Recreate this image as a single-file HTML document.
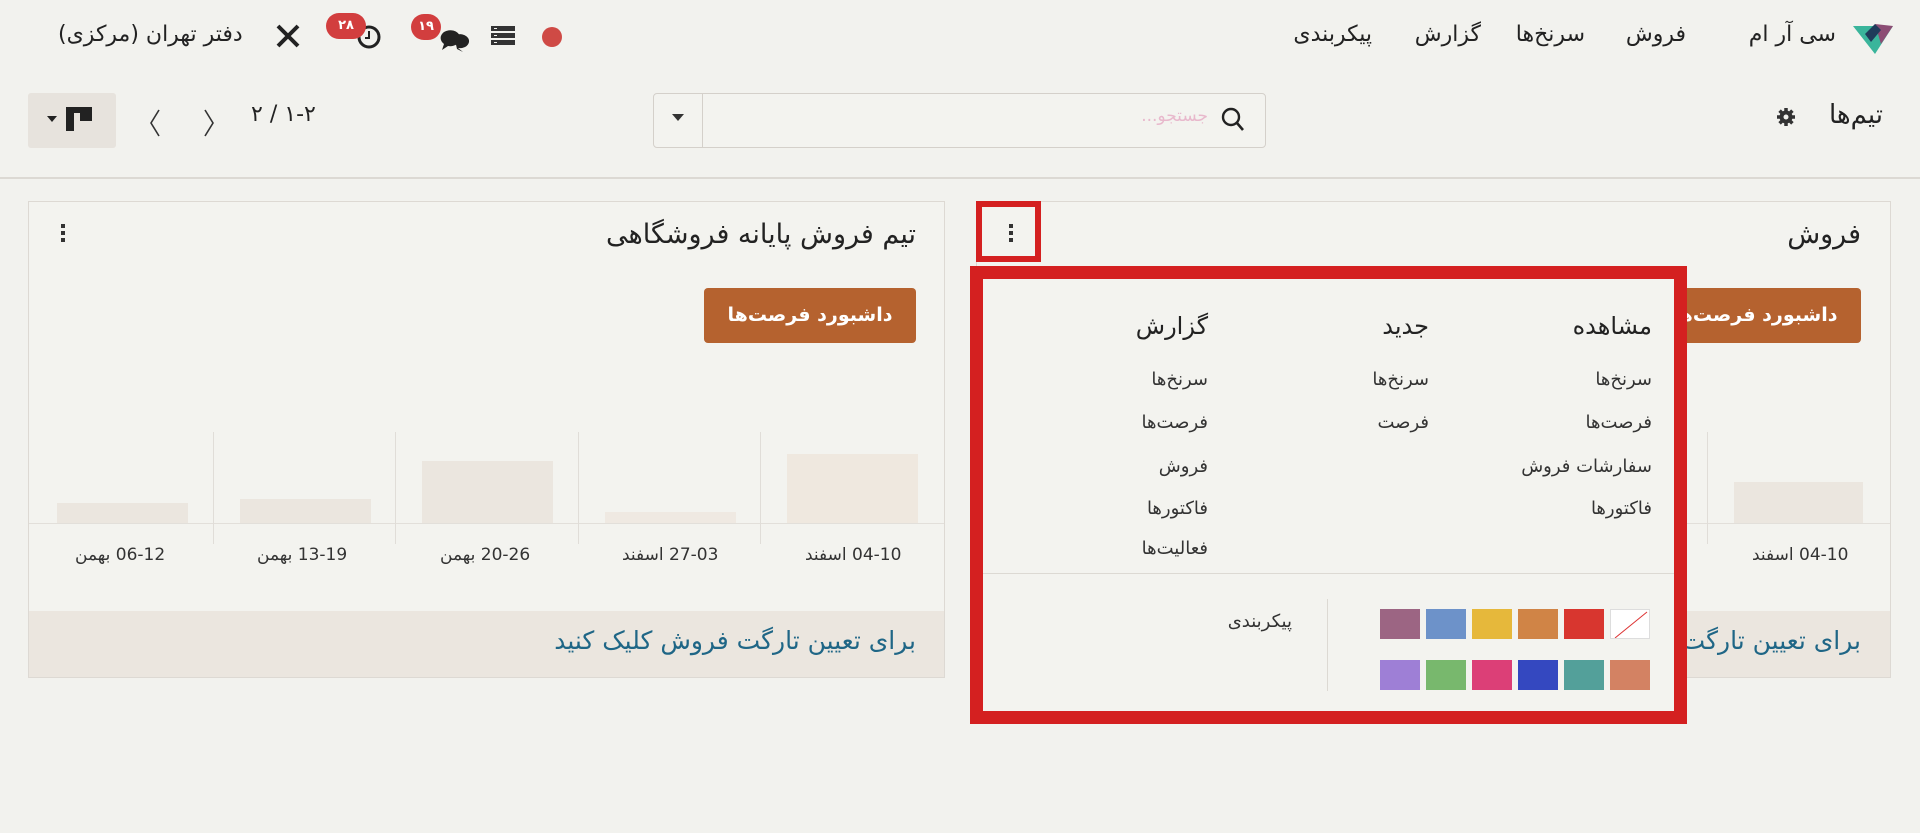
<!DOCTYPE html>
<html><head><meta charset="utf-8"><style>
*{margin:0;padding:0;box-sizing:border-box}
body{width:1920px;height:833px;background:#f2f2ee;font-family:"DejaVu Sans","Liberation Sans","Noto Sans CJK SC",sans-serif;color:#222;position:relative;overflow:hidden}
.a{position:absolute;white-space:nowrap}
.r{direction:rtl}
.nav{font-size:22px;top:22px}
.card{position:absolute;top:201px;width:917px;height:477px;border:1px solid #ddd9d3;background:#f3f3ef}
.ft{position:absolute;left:0;right:0;bottom:0;height:66px;background:#ebe6df}
.btn{position:absolute;background:#b5622f;color:#fff;font-size:19px;font-weight:bold;border-radius:4px;height:55px;line-height:55px;text-align:center}
.bar{position:absolute;background:#ebe6df}
.vl{position:absolute;width:1px;background:#e0ddd8}
.lbl{position:absolute;font-size:17px;color:#333;top:343px}
.sw{position:absolute;width:40px;height:30px}
.mi{font-size:18px;color:#333}
.mh{font-size:24px;color:#222}
</style></head><body>
<svg class="a" style="left:1851px;top:20px" width="44" height="36" viewBox="0 0 44 36"><path d="M2 6 L42 6 L24 34 Z" fill="#3ab59b"/><path d="M24 4 L42 6 L30 24 Z" fill="#8c4d74"/><path d="M14 14 L24 4 L30 10 L20 22Z" fill="#1f3b5a"/></svg>
<div class="a r nav" style="right:84px">سی آر ام</div>
<div class="a r nav" style="right:234px">فروش</div>
<div class="a r nav" style="right:335px">سرنخ‌ها</div>
<div class="a r nav" style="right:439px">گزارش</div>
<div class="a r nav" style="right:548px">پیکربندی</div>
<div class="a" style="left:542px;top:27px;width:20px;height:20px;border-radius:50%;background:#cf4a45"></div>
<svg class="a" style="left:490px;top:25px" width="26" height="22"><g fill="#333"><rect x="1" y="1" width="24" height="5"/><rect x="1" y="8" width="24" height="5"/><rect x="1" y="15" width="24" height="5"/></g><g fill="#f2f2ee"><rect x="4" y="3" width="3" height="1"/><rect x="4" y="10" width="3" height="1"/><rect x="4" y="17" width="3" height="1"/></g></svg>
<svg class="a" style="left:434px;top:26px" width="36" height="26"><path d="M10 6 a10 8 0 1 1 4 14 l-6 4 2-6 a10 8 0 0 1 0-12z" fill="#222"/><path d="M20 10 a9 7 0 1 1 4 12 l5 4-6-3z" fill="#222"/></svg>
<div class="a" style="left:411px;top:14px;min-width:30px;height:26px;border-radius:13px;background:#d23e3e;color:#fff;font-size:13px;font-weight:bold;line-height:26px;text-align:center">۱۹</div>
<svg class="a" style="left:356px;top:24px" width="26" height="26"><circle cx="13" cy="13" r="10" fill="none" stroke="#222" stroke-width="3"/><path d="M13 7v7h-4" fill="none" stroke="#222" stroke-width="2"/></svg>
<div class="a" style="left:326px;top:13px;width:40px;height:26px;border-radius:13px;background:#d23e3e;color:#fff;font-size:13px;font-weight:bold;line-height:26px;text-align:center">۲۸</div>
<svg class="a" style="left:274px;top:22px" width="28" height="28"><path d="M4 4 L24 24 M24 4 L4 24" stroke="#222" stroke-width="4"/></svg>
<div class="a r" style="left:58px;top:22px;font-size:22px">دفتر تهران (مرکزی)</div>
<div class="a r" style="right:37px;top:100px;font-size:26px">تیم‌ها</div>
<svg class="a" style="left:1776px;top:107px" width="20" height="20" viewBox="0 0 20 20"><circle cx="10" cy="10" r="6.5" fill="#333"/><g stroke="#333" stroke-width="3.5"><path d="M10 1v18M1 10h18M3.6 3.6l12.8 12.8M16.4 3.6L3.6 16.4"/></g><circle cx="10" cy="10" r="2.5" fill="#f2f2ee"/></svg>
<div class="a" style="left:653px;top:93px;width:613px;height:55px;border:1px solid #d4d0ca;border-radius:4px;background:#f3f3ef"></div>
<div class="a" style="left:702px;top:93px;width:1px;height:55px;background:#d4d0ca"></div>
<div class="a" style="left:672px;top:114px;border:6px solid transparent;border-top:7px solid #333;border-bottom:0"></div>
<svg class="a" style="left:1220px;top:106px" width="26" height="28"><circle cx="11" cy="11" r="8" fill="none" stroke="#222" stroke-width="2.4"/><path d="M17 17l6 7" stroke="#222" stroke-width="2.6"/></svg>
<div class="a r" style="right:712px;top:106px;font-size:17px;color:#e8b8cc">جستجو...</div>
<div class="a" style="left:251px;top:102px;font-size:22px;display:flex;gap:0"><span>۲</span><span>&nbsp;/&nbsp;</span><span>۱</span><span>-</span><span>۲</span></div>
<svg class="a" style="left:143px;top:108px" width="80" height="30"><path d="M16 2 L8 15 L16 28 M62 2 L70 15 L62 28" fill="none" stroke="#333" stroke-width="1.6"/></svg>
<div class="a" style="left:28px;top:93px;width:88px;height:55px;background:#e7e3dd;border-radius:3px"></div>
<div class="a" style="left:47px;top:116px;border:5px solid transparent;border-top:6px solid #222;border-bottom:0"></div>
<div class="a" style="left:66px;top:107px;width:26px;height:6px;background:#222"></div>
<div class="a" style="left:66px;top:107px;width:8px;height:24px;background:#222"></div>
<div class="a" style="left:80px;top:107px;width:12px;height:14px;background:#222"></div>
<div class="a" style="left:0;top:177px;width:1920px;height:2px;background:#dcd9d3"></div>

<div class="card" style="left:28px">
 <div class="a r" style="right:28px;top:17px;font-size:27px">تیم فروش پایانه فروشگاهی</div>
 <div class="a" style="left:32px;top:22px;width:4px;font-size:0"><div style="height:4px;background:#333;margin-bottom:3px"></div><div style="height:4px;background:#333;margin-bottom:3px"></div><div style="height:4px;background:#333"></div></div>
 <div class="btn r" style="right:28px;top:86px;width:212px">داشبورد فرصت‌ها</div>
 <div class="a" style="left:0;right:0;top:321px;height:1px;background:#e2dfda"></div>
 <div class="vl" style="left:184px;top:230px;height:112px"></div>
 <div class="vl" style="left:366px;top:230px;height:112px"></div>
 <div class="vl" style="left:549px;top:230px;height:112px"></div>
 <div class="vl" style="left:731px;top:230px;height:112px"></div>
 <div class="bar" style="left:28px;width:131px;top:301px;height:20px"></div>
 <div class="bar" style="left:211px;width:131px;top:297px;height:24px"></div>
 <div class="bar" style="left:393px;width:131px;top:259px;height:62px"></div>
 <div class="bar" style="left:576px;width:131px;top:310px;height:11px;background:#efe9e2"></div>
 <div class="bar" style="left:758px;width:131px;top:252px;height:69px;background:#efe8df"></div>
 <div class="lbl r" style="left:46px">06-12 بهمن</div>
 <div class="lbl r" style="left:228px">13-19 بهمن</div>
 <div class="lbl r" style="left:411px">20-26 بهمن</div>
 <div class="lbl r" style="left:593px">27-03 اسفند</div>
 <div class="lbl r" style="left:776px">04-10 اسفند</div>
 <div class="ft"><div class="a r" style="right:28px;top:15px;font-size:25px;color:#1f6686">برای تعیین تارگت فروش کلیک کنید</div></div>
</div>

<div class="card" style="left:976px;width:915px">
 <div class="a r" style="right:29px;top:17px;font-size:27px">فروش</div>
 <div class="btn r" style="right:29px;top:86px;width:212px">داشبورد فرصت‌ها</div>
 <div class="a" style="left:0;right:0;top:321px;height:1px;background:#e2dfda"></div>
 <div class="vl" style="left:730px;top:230px;height:112px"></div>
 <div class="bar" style="left:757px;width:129px;top:280px;height:41px"></div>
 <div class="lbl r" style="left:775px">04-10 اسفند</div>
 <div class="ft"><div class="a r" style="right:29px;top:15px;font-size:25px;color:#1f6686">برای تعیین تارگت فروش کلیک کنید</div></div>
 <div class="a" style="left:32px;top:22px;width:4px;font-size:0"><div style="height:4px;background:#333;margin-bottom:3px"></div><div style="height:4px;background:#333;margin-bottom:3px"></div><div style="height:4px;background:#333"></div></div>
</div>
<div class="a" style="left:976px;top:201px;width:65px;height:61px;border:6px solid #d42020"></div>

<div class="a" style="left:970px;top:266px;width:717px;height:458px;border:13px solid #d42020;background:#f3f3ef">
 <div class="a r mh" style="right:22px;top:33px">مشاهده</div>
 <div class="a r mh" style="right:245px;top:33px">جدید</div>
 <div class="a r mh" style="right:466px;top:33px">گزارش</div>
 <div class="a r mi" style="right:22px;top:90px">سرنخ‌ها</div>
 <div class="a r mi" style="right:22px;top:133px">فرصت‌ها</div>
 <div class="a r mi" style="right:22px;top:177px">سفارشات فروش</div>
 <div class="a r mi" style="right:22px;top:219px">فاکتورها</div>
 <div class="a r mi" style="right:245px;top:90px">سرنخ‌ها</div>
 <div class="a r mi" style="right:245px;top:133px">فرصت</div>
 <div class="a r mi" style="right:466px;top:90px">سرنخ‌ها</div>
 <div class="a r mi" style="right:466px;top:133px">فرصت‌ها</div>
 <div class="a r mi" style="right:466px;top:177px">فروش</div>
 <div class="a r mi" style="right:466px;top:219px">فاکتورها</div>
 <div class="a r mi" style="right:466px;top:259px">فعالیت‌ها</div>
 <div class="a" style="left:0;right:0;top:294px;height:1px;background:#dcd9d3"></div>
 <div class="a" style="left:344px;top:320px;width:1px;height:92px;background:#dcd9d3"></div>
 <div class="a r mi" style="right:382px;top:332px">پیکربندی</div>
 <svg class="sw" style="left:627px;top:330px;background:#fff;border:1px solid #ddd" width="40" height="30"><path d="M36 2 L4 28" stroke="#d33" stroke-width="1"/></svg>
 <div class="sw" style="left:581px;top:330px;background:#d8362f"></div>
 <div class="sw" style="left:535px;top:330px;background:#d08446"></div>
 <div class="sw" style="left:489px;top:330px;background:#e6b83b"></div>
 <div class="sw" style="left:443px;top:330px;background:#6d92c9"></div>
 <div class="sw" style="left:397px;top:330px;background:#9c6583"></div>
 <div class="sw" style="left:627px;top:381px;background:#d38263"></div>
 <div class="sw" style="left:581px;top:381px;background:#53a09a"></div>
 <div class="sw" style="left:535px;top:381px;background:#3448c0"></div>
 <div class="sw" style="left:489px;top:381px;background:#dc3f77"></div>
 <div class="sw" style="left:443px;top:381px;background:#78b86d"></div>
 <div class="sw" style="left:397px;top:381px;background:#9e7fd6"></div>
</div>
</body></html>
